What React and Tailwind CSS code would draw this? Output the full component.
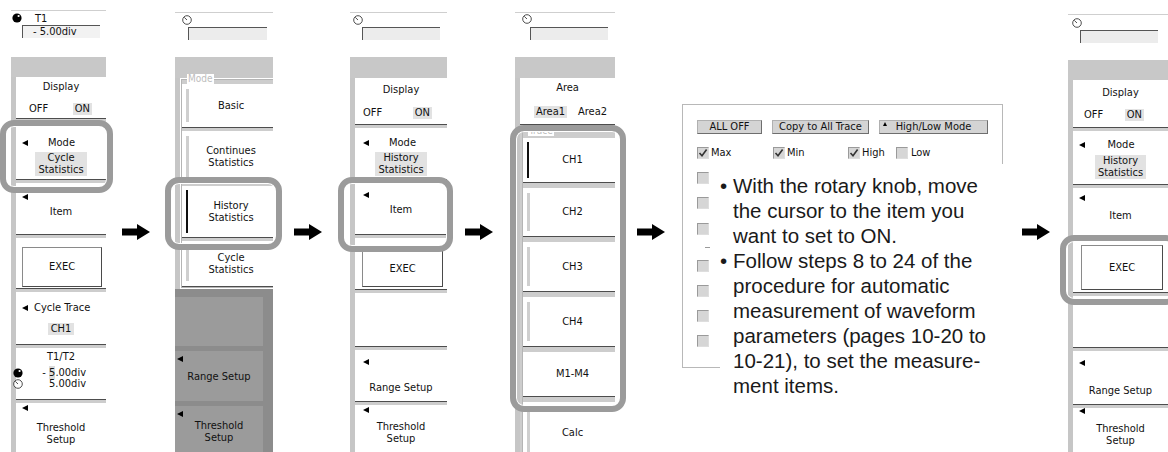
const panelFont = "[font-family:'DejaVu_Sans_Condensed','Liberation_Sans',sans-serif]";
const bodyFont = "[font-family:'Liberation_Sans',Arial,sans-serif]";

function Tri({ cls = '' }) {
  return <div className={`w-0 h-0 shrink-0 border-y-[3.5px] border-y-transparent border-r-[6px] border-r-black ${cls}`} />;
}

function OpenKnob({ cls = '' }) {
  return (
    <svg className={`shrink-0 ${cls}`} width="10" height="10" viewBox="0 0 10 10">
      <circle cx="5" cy="5" r="4.3" fill="#fff" stroke="#222" strokeWidth="0.8" />
      <line x1="5" y1="5" x2="2.3" y2="2.4" stroke="#222" strokeWidth="0.8" />
    </svg>
  );
}

function BlackKnob({ cls = '' }) {
  return (
    <svg className={`shrink-0 ${cls}`} width="10" height="10" viewBox="0 0 10 10">
      <circle cx="5" cy="5" r="4.6" fill="#000" />
      <circle cx="6.6" cy="3" r="1.1" fill="#fff" />
    </svg>
  );
}

function Arrow({ cls = '' }) {
  return (
    <svg className={`shrink-0 mt-[224px] ${cls}`} width="28" height="16" viewBox="0 0 28 16">
      <rect x="0" y="4.5" width="17" height="7" fill="#000" />
      <polygon points="15,0 28,8 15,16" fill="#000" />
    </svg>
  );
}

function Sec({ cls = '', children }) {
  return <div className={`bg-white border-b border-[#4d4d4d] shrink-0 ${cls}`}>{children}</div>;
}

function Body({ children }) {
  return <div className="flex-1 flex flex-col gap-[3px] bg-[#cdcdcd] border-l-[5px] border-[#c6c6c6]">{children}</div>;
}

function Top({ cls, knob, box }) {
  return (
    <div className={`bg-white border-t border-[#cfcfcf] flex flex-col shrink-0 ${cls}`}>
      <OpenKnob cls={knob} />
      <div className={`h-[13px] bg-[#ececec] border-t border-l border-[#555] ${box}`} />
    </div>
  );
}

function Hi({ children }) {
  return <span className="bg-[#e2e2e2] px-[2px]">{children}</span>;
}

function ModeRow({ pl }) {
  return (
    <div className={`flex items-center h-[12px] ${pl}`}>
      <Tri />
      <span className="flex-1 text-center pr-[11px]">Mode</span>
    </div>
  );
}

function Panel1() {
  return (
    <div className="ml-[11px] w-[95px] h-[452px] flex flex-col shrink-0">
      <div className="mt-[10px] h-[47px] bg-white border-t border-[#cfcfcf] flex flex-col shrink-0">
        <div className="h-[13px] mt-[1px] flex items-start">
          <BlackKnob cls="ml-[1px] mt-[1px]" />
          <span className="ml-[13px] mt-[2px] leading-[10px]">T1</span>
        </div>
        <div className="ml-[11px] mr-[6px] h-[13px] bg-[#f2f2f2] border-t border-l border-[#555] pl-[10px] leading-[12px]">- 5.00div</div>
      </div>
      <div className="h-[20px] bg-[#c8c8c8] shrink-0" />
      <Body>
        <Sec cls="h-[42px] pt-[4px] flex flex-col items-center">
          <span>Display</span>
          <div className="mt-[10px] w-full flex justify-between pl-[13px] pr-[14px]">
            <span>OFF</span>
            <Hi>ON</Hi>
          </div>
        </Sec>
        <Sec cls="h-[58px] pt-[15px] flex flex-col">
          <ModeRow pl="pl-[6px]" />
          <div className="mt-[3px] mx-auto w-fit px-[3px] bg-[#e2e2e2] text-center">Cycle<br />Statistics</div>
        </Sec>
        <Sec cls="h-[52px] pt-[11px] flex flex-col">
          <Tri cls="ml-[6px]" />
          <span className="mt-[6px] text-center">Item</span>
        </Sec>
        <Sec cls="h-[51px] pt-[9px] pl-[6px] pr-[4px]">
          <div className="h-[40px] border border-[#8a8a8a] border-r-[#4a4a4a] border-b-[#4a4a4a] flex items-center justify-center">EXEC</div>
        </Sec>
        <Sec cls="h-[53px] pt-[10px] flex flex-col">
          <div className="flex items-center pl-[6px]">
            <Tri />
            <span className="ml-[6px]">Cycle Trace</span>
          </div>
          <div className="mt-[9px] mx-auto w-fit px-[3px] bg-[#e2e2e2]">CH1</div>
        </Sec>
        <Sec cls="h-[52px] pt-[3px] flex flex-col">
          <span className="text-center">T1/T2</span>
          <div className="mt-[5px] h-[10px] flex items-center">
            <BlackKnob cls="-ml-[3px]" />
            <span className="flex-1 text-right pr-[20px]">- <span className="bg-[#dcdcdc]">5</span>.00div</span>
          </div>
          <div className="mt-[1px] h-[10px] flex items-center">
            <OpenKnob cls="-ml-[3px]" />
            <span className="flex-1 text-right pr-[20px]">5.00div</span>
          </div>
        </Sec>
        <Sec cls="flex-1 pt-[2px] flex flex-col border-b-0">
          <Tri cls="ml-[6px]" />
          <span className="mt-[11px] text-center">Threshold<br />Setup</span>
        </Sec>
      </Body>
    </div>
  );
}

function Btn({ h, bar = 'light', children }) {
  return (
    <div className={`bg-white border-b border-[#4d4d4d] flex items-stretch shrink-0 ${h}`}>
      {bar === 'light' && <div className="ml-[4px] w-[3px] my-[5px] bg-[#cfcfcf] shrink-0" />}
      {bar === 'dark' && <div className="ml-[4px] w-[2px] my-[4px] mr-[1px] bg-[#111] shrink-0" />}
      {bar === 'none' && <div className="ml-[4px] w-[3px] shrink-0" />}
      <div className="flex-1 flex items-center justify-center text-center">{children}</div>
    </div>
  );
}

function Panel2() {
  return (
    <div className="ml-[25px] w-[98px] h-[452px] flex flex-col shrink-0">
      <Top cls="mt-[12px] h-[45px]" knob="mt-[2px] ml-[7px]" box="mt-[2px] ml-[13px] mr-[6px]" />
      <div className="h-[21px] bg-[#c8c8c8] shrink-0" />
      <div className="flex-1 flex flex-col bg-white border-l-[5px] border-[#c6c6c6]">
        <fieldset className="-mt-[4px] ml-[1px] border-t border-l border-b border-[#b5b5b5] bg-[#cdcdcd]">
          <legend className="ml-[5px] px-[1px] text-[10px] leading-[10px] text-[#bdbdbd] bg-white">Mode</legend>
          <div className="flex flex-col gap-[3px]">
            <Btn h="h-[44px]">Basic</Btn>
            <Btn h="h-[52px]">Continues<br />Statistics</Btn>
            <Btn h="h-[52px]" bar="dark">History<br />Statistics</Btn>
            <Btn h="h-[46px]">Cycle<br />Statistics</Btn>
          </div>
        </fieldset>
        <div className="flex-1 -ml-[5px] mt-[1px] bg-[#8c8c8c] pt-[8px] pr-[10px] flex flex-col gap-[5px]">
          <div className="h-[49px] bg-[#9b9b9b] shrink-0" />
          <div className="h-[50px] bg-[#9b9b9b] pt-[5px] flex flex-col shrink-0">
            <Tri cls="ml-[2px]" />
            <span className="mt-[9px] text-center">Range Setup</span>
          </div>
          <div className="flex-1 bg-[#9b9b9b] pt-[5px] flex flex-col">
            <Tri cls="ml-[2px]" />
            <span className="mt-[3px] text-center">Threshold<br />Setup</span>
          </div>
        </div>
      </div>
    </div>
  );
}

function Panel3() {
  return (
    <div className="ml-[28px] w-[97px] h-[452px] flex flex-col shrink-0">
      <Top cls="mt-[12px] h-[45px]" knob="mt-[2px] ml-[3px]" box="mt-[2px] ml-[12px] mr-[7px]" />
      <div className="h-[21px] bg-[#c8c8c8] shrink-0" />
      <Body>
        <Sec cls="h-[47px] pt-[6px] flex flex-col items-center">
          <span>Display</span>
          <div className="mt-[11px] w-full flex justify-between pl-[8px] pr-[15px]">
            <span>OFF</span>
            <Hi>ON</Hi>
          </div>
        </Sec>
        <Sec cls="h-[52px] pt-[9px] flex flex-col">
          <ModeRow pl="pl-[8px]" />
          <div className="mt-[3px] mx-auto w-fit px-[3px] bg-[#e2e2e2] text-center">History<br />Statistics</div>
        </Sec>
        <Sec cls="h-[52px] pt-[9px] flex flex-col">
          <Tri cls="ml-[8px]" />
          <span className="mt-[6px] text-center">Item</span>
        </Sec>
        <Sec cls="h-[52px] pt-[12px] pl-[7px] pr-[4px]">
          <div className="h-[37px] border border-[#8a8a8a] border-r-[#4a4a4a] border-b-[#4a4a4a] flex items-center justify-center">EXEC</div>
        </Sec>
        <Sec cls="h-[54px]" />
        <Sec cls="h-[52px] pt-[9px] flex flex-col">
          <Tri cls="ml-[8px]" />
          <span className="mt-[17px] text-center">Range Setup</span>
        </Sec>
        <Sec cls="flex-1 pt-[2px] flex flex-col border-b-0">
          <Tri cls="ml-[8px]" />
          <span className="mt-[8px] text-center">Threshold<br />Setup</span>
        </Sec>
      </Body>
    </div>
  );
}

function Panel4() {
  return (
    <div className="ml-[22px] w-[100px] h-[452px] flex flex-col shrink-0">
      <Top cls="mt-[12px] h-[45px]" knob="mt-[1px] ml-[7px]" box="mt-[3px] ml-[15px] mr-[7px]" />
      <div className="h-[21px] bg-[#c8c8c8] shrink-0" />
      <Body>
        <Sec cls="h-[47px] pt-[4px] flex flex-col items-center">
          <span>Area</span>
          <div className="mt-[12px] w-full flex justify-between pl-[14px] pr-[8px]">
            <Hi>Area1</Hi>
            <span>Area2</span>
          </div>
        </Sec>
        <fieldset className="-mt-[2px] ml-[2px] pt-[2px] border-t border-l border-[#b5b5b5] bg-[#cdcdcd]">
          <legend className="ml-[5px] px-[1px] text-[10px] leading-[10px] text-[#bdbdbd] bg-white">Trace</legend>
          <div className="flex flex-col gap-[5px]">
            <Btn h="h-[45px]" bar="dark">CH1</Btn>
            <Btn h="h-[49px]">CH2</Btn>
            <Btn h="h-[50px]">CH3</Btn>
            <Btn h="h-[50px]">CH4</Btn>
            <Btn h="h-[45px]" bar="none">M1-M4</Btn>
            <Btn h="h-[62px]">Calc</Btn>
          </div>
        </fieldset>
      </Body>
    </div>
  );
}

function Panel6() {
  return (
    <div className="ml-[18px] w-[100px] h-[452px] flex flex-col shrink-0">
      <Top cls="mt-[14px] h-[46px]" knob="mt-[3px] ml-[4px]" box="mt-[2px] ml-[12px] mr-[10px]" />
      <div className="h-[20px] bg-[#c8c8c8] shrink-0" />
      <Body>
        <Sec cls="h-[48px] pt-[7px] flex flex-col items-center">
          <span>Display</span>
          <div className="mt-[10px] w-full flex justify-between pl-[11px] pr-[24px]">
            <span>OFF</span>
            <Hi>ON</Hi>
          </div>
        </Sec>
        <Sec cls="h-[54px] pt-[8px] flex flex-col">
          <ModeRow pl="pl-[6px]" />
          <div className="mt-[4px] mx-auto w-fit px-[3px] bg-[#e2e2e2] text-center">History<br />Statistics</div>
        </Sec>
        <Sec cls="h-[50px] pt-[7px] flex flex-col">
          <Tri cls="ml-[6px]" />
          <span className="mt-[9px] text-center">Item</span>
        </Sec>
        <Sec cls="h-[52px] pt-[4px] pl-[8px] pr-[5px]">
          <div className="h-[45px] border border-[#8a8a8a] border-r-[#4a4a4a] border-b-[#4a4a4a] flex items-center justify-center">EXEC</div>
        </Sec>
        <Sec cls="h-[52px]" />
        <Sec cls="h-[54px] pt-[9px] flex flex-col">
          <Tri cls="ml-[6px]" />
          <span className="mt-[19px] text-center">Range Setup</span>
        </Sec>
        <Sec cls="flex-1 flex flex-col border-b-0">
          <Tri cls="ml-[6px]" />
          <span className="mt-[9px] text-center">Threshold<br />Setup</span>
        </Sec>
      </Body>
    </div>
  );
}

function Check({ on, cls = '' }) {
  return (
    <span className={`w-[12px] h-[12px] shrink-0 bg-[#d6d6d6] border border-[#9a9a9a] border-r-[#dedede] border-b-[#dedede] flex items-center justify-center ${cls}`}>
      {on && (
        <svg width="10" height="10" viewBox="0 0 10 10">
          <polyline points="1.5,5 4,7.8 8.6,1.6" fill="none" stroke="#333" strokeWidth="1.6" />
        </svg>
      )}
    </span>
  );
}

function DlgBtn({ w, children }) {
  return (
    <div className={`h-[14px] shrink-0 bg-[#d4d4d4] border border-[#b0b0b0] border-r-[#6e6e6e] border-b-[#6e6e6e] flex items-center leading-[12px] ${w}`}>
      {children}
    </div>
  );
}

function Dialog() {
  return (
    <div className="ml-[17px] mt-[104px] w-[321px] shrink-0 flex flex-col">
      <div className={`h-[60px] border-t border-l border-r border-[#b8b8b8] pl-[14px] pt-[15px] text-[11px] ${panelFont}`}>
        <div className="flex gap-[10px]">
          <DlgBtn w="w-[65px] justify-center">ALL OFF</DlgBtn>
          <DlgBtn w="w-[97px] justify-center">Copy to All Trace</DlgBtn>
          <DlgBtn w="w-[109px] items-start">
            <div className="ml-[3px] mt-[1px] w-0 h-0 border-x-[2.5px] border-x-transparent border-b-[4px] border-b-black" />
            <span className="flex-1 text-center pr-[7px]">High/Low Mode</span>
          </DlgBtn>
        </div>
        <div className="flex mt-[13px] items-center h-[12px]">
          <div className="w-[76px] flex items-center gap-[2px]"><Check on />Max</div>
          <div className="w-[75px] flex items-center gap-[2px]"><Check on />Min</div>
          <div className="w-[48px] flex items-center gap-[2px]"><Check on />High</div>
          <div className="flex items-center gap-[3px]"><Check />Low</div>
        </div>
      </div>
      <div className="flex items-start">
        <div className="w-[38px] h-[204px] shrink-0 border-l border-b border-[#b8b8b8] pl-[14px] flex flex-col">
          <Check cls="mt-[8px]" />
          <Check cls="mt-[13px]" />
          <Check cls="mt-[14px]" />
          <div className="mt-[12px] ml-[8px] w-[5px] h-[1px] bg-[#9a9a9a]" />
          <Check cls="mt-[12px]" />
          <Check cls="mt-[13px]" />
          <Check cls="mt-[13px]" />
          <Check cls="mt-[13px]" />
        </div>
        <div className={`mt-[9px] text-[20.5px] leading-[25px] text-[#1a1a1a] whitespace-nowrap ${bodyFont}`}>
          <div className="flex">
            <span className="w-[13px] shrink-0">•</span>
            <div>With the rotary knob, move<br />the cursor to the item you<br />want to set to ON.</div>
          </div>
          <div className="flex">
            <span className="w-[13px] shrink-0">•</span>
            <div>Follow steps 8 to 24 of the<br />procedure for automatic<br />measurement of waveform<br />parameters (pages 10-20 to<br />10-21), to set the measure-<br />ment items.</div>
          </div>
        </div>
      </div>
    </div>
  );
}

function Ring({ cls }) {
  return <div className={`absolute pointer-events-none rounded-[14px] border-[6px] border-[#9b9b9b] shadow-[inset_0_0_0_1px_#ffffff] ${cls}`} />;
}

export default function App() {
  return (
    <div className={`relative w-[1168px] h-[452px] overflow-hidden bg-white text-[#111] text-[11px] leading-[12px] ${panelFont}`}>
      <div className="flex items-start">
        <Panel1 />
        <Arrow cls="ml-[16px]" />
        <Panel2 />
        <Arrow cls="ml-[21px]" />
        <Panel3 />
        <Arrow cls="ml-[18px]" />
        <Panel4 />
        <Arrow cls="ml-[22px]" />
        <Dialog />
        <Arrow cls="ml-[19px]" />
        <Panel6 />
      </div>
      <Ring cls="left-0 top-[120px] w-[113px] h-[73px]" />
      <Ring cls="left-[165px] top-[177px] w-[117px] h-[73px]" />
      <Ring cls="left-[338px] top-[177px] w-[115px] h-[75px]" />
      <Ring cls="left-[510px] top-[125px] w-[116px] h-[287px]" />
      <Ring cls="left-[1060px] top-[235px] w-[120px] h-[70px]" />
    </div>
  );
}
